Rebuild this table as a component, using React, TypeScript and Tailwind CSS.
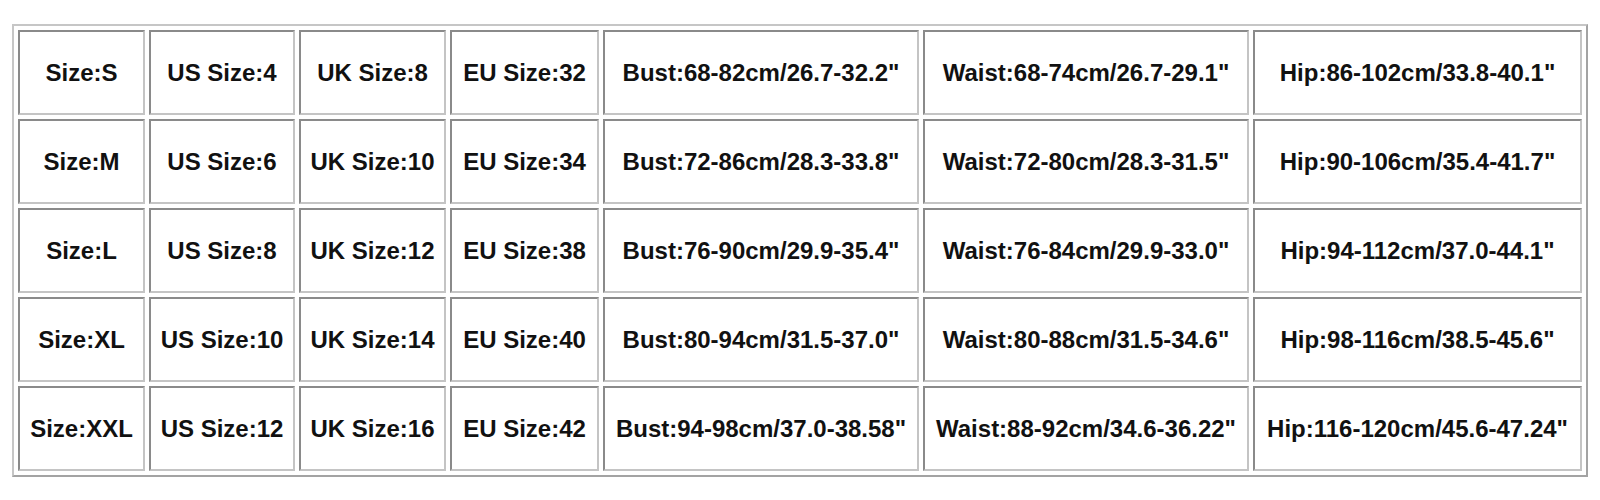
const ROWS: string[][] = [
  ['Size:S', 'US Size:4', 'UK Size:8', 'EU Size:32', 'Bust:68-82cm/26.7-32.2"', 'Waist:68-74cm/26.7-29.1"', 'Hip:86-102cm/33.8-40.1"'],
  ['Size:M', 'US Size:6', 'UK Size:10', 'EU Size:34', 'Bust:72-86cm/28.3-33.8"', 'Waist:72-80cm/28.3-31.5"', 'Hip:90-106cm/35.4-41.7"'],
  ['Size:L', 'US Size:8', 'UK Size:12', 'EU Size:38', 'Bust:76-90cm/29.9-35.4"', 'Waist:76-84cm/29.9-33.0"', 'Hip:94-112cm/37.0-44.1"'],
  ['Size:XL', 'US Size:10', 'UK Size:14', 'EU Size:40', 'Bust:80-94cm/31.5-37.0"', 'Waist:80-88cm/31.5-34.6"', 'Hip:98-116cm/38.5-45.6"'],
  ['Size:XXL', 'US Size:12', 'UK Size:16', 'EU Size:42', 'Bust:94-98cm/37.0-38.58"', 'Waist:88-92cm/34.6-36.22"', 'Hip:116-120cm/45.6-47.24"'],
];

const COL_WIDTHS = [127, 146, 147, 149, 316, 326, 329];

export default function App() {
  return (
    <div className="min-h-[500px] w-[1600px] bg-white pt-[24px] pl-[12px] font-['Liberation_Sans',Arial,sans-serif]">
      <table className="table-fixed border-separate border-spacing-[4px] border-2 border-t-[#c6c6c6] border-l-[#c6c6c6] border-r-[#a3a3a3] border-b-[#a3a3a3]">
        <colgroup>
          {COL_WIDTHS.map((w, i) => (
            <col key={i} style={{ width: w }} />
          ))}
        </colgroup>
        <tbody>
          {ROWS.map((row, r) => (
            <tr key={r}>
              {row.map((cell, c) => (
                <td
                  key={c}
                  className="h-[85px] whitespace-nowrap border-2 border-t-[#8a8a8a] border-l-[#8a8a8a] border-r-[#c4c4c4] border-b-[#c4c4c4] p-0 text-center align-middle text-[24px] font-bold leading-none text-[#111]"
                >
                  {cell}
                </td>
              ))}
            </tr>
          ))}
        </tbody>
      </table>
    </div>
  );
}
